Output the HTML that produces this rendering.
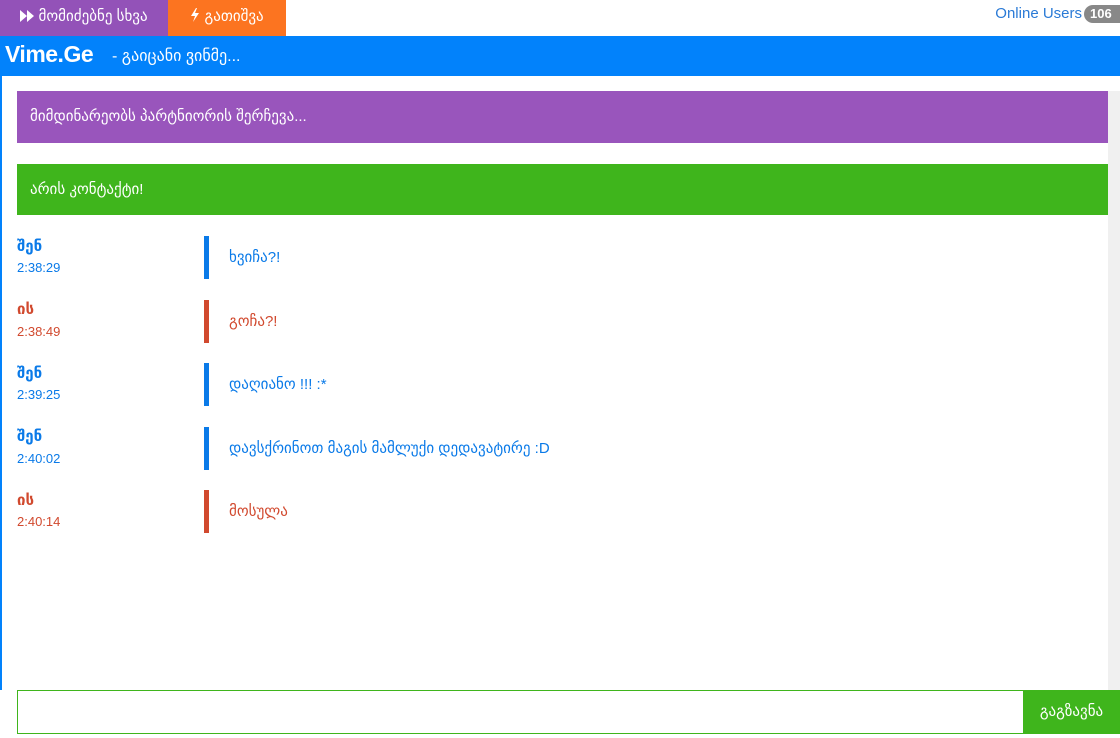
<!DOCTYPE html>
<html><head><meta charset="utf-8"><style>
*{margin:0;padding:0;box-sizing:border-box}
body{width:1120px;height:738px;overflow:hidden;background:#fff;font-family:"Liberation Sans","DejaVu Sans",sans-serif;position:relative}
.a{position:absolute}
.btn{top:0;height:36px;color:#fff;font-size:15px;line-height:34px;text-align:center}
.name{font-weight:bold;font-size:15px}
.time{font-size:13px}
.bar{width:5px;height:43px}
.msg{font-size:15px}
.b{color:#0a7ae8}.r{color:#d1492e}
</style></head><body>
<div class="a btn" style="left:0;width:168px;background:#9352b8"><svg width="14" height="12" viewBox="0 0 14 12" style="vertical-align:-1px"><path d="M0 0L7 6L0 12Z M7 0L14 6L7 12Z" fill="#fff"/></svg> მომიძებნე სხვა</div>
<div class="a btn" style="left:168px;width:118px;background:#fc7420"><svg width="10" height="14" viewBox="0 0 10 14" style="vertical-align:-1px"><path d="M6 0L1 8H5L3 14L9 5H5L7 0Z" fill="#fff"/></svg> გათიშვა</div>
<div class="a" style="right:38px;top:5px;font-size:15px;color:#2a7ad6">Online Users</div>
<div class="a" style="right:0;top:5px;width:36px;height:18px;background:#888;color:#fff;border-radius:9px 0 0 9px;font-size:13px;font-weight:bold;line-height:18px;padding-left:6px">106</div>
<div class="a" style="left:0;top:36px;width:1120px;height:40px;background:#0282fb"></div>
<div class="a" style="left:5px;top:41px;color:#fff;font-weight:bold;font-size:23px;letter-spacing:-0.5px">Vime.Ge</div>
<div class="a" style="left:112px;top:46px;color:#fff;font-size:16px">- გაიცანი ვინმე...</div>
<div class="a" style="left:0;top:76px;width:2px;height:614px;background:#0282fb"></div>
<div class="a" style="left:1108px;top:91px;width:12px;height:599px;background:#f0f0f0"></div>
<div class="a" style="left:17px;top:91px;width:1091px;height:52px;background:#9955bc;color:#fff;font-size:15px;line-height:52px;padding-left:13px">მიმდინარეობს პარტნიორის შერჩევა...</div>
<div class="a" style="left:17px;top:164px;width:1091px;height:51px;background:#3fb51c;color:#fff;font-size:15px;line-height:51px;padding-left:13px">არის კონტაქტი!</div>

<div class="a name b" style="left:17px;top:237px">შენ</div><div class="a time b" style="left:17px;top:260px">2:38:29</div>
<div class="a bar" style="left:204px;top:236px;background:#0a7ae8"></div><div class="a msg b" style="left:229px;top:248px">ხვიჩა?!</div>

<div class="a name r" style="left:17px;top:300px">ის</div><div class="a time r" style="left:17px;top:324px">2:38:49</div>
<div class="a bar" style="left:204px;top:300px;background:#d1492e"></div><div class="a msg r" style="left:229px;top:312px">გოჩა?!</div>

<div class="a name b" style="left:17px;top:364px">შენ</div><div class="a time b" style="left:17px;top:387px">2:39:25</div>
<div class="a bar" style="left:204px;top:363px;background:#0a7ae8"></div><div class="a msg b" style="left:229px;top:375px">დაღიანო !!! :*</div>

<div class="a name b" style="left:17px;top:427px">შენ</div><div class="a time b" style="left:17px;top:451px">2:40:02</div>
<div class="a bar" style="left:204px;top:427px;background:#0a7ae8"></div><div class="a msg b" style="left:229px;top:439px">დავსქრინოთ მაგის მამლუქი დედავატირე :D</div>

<div class="a name r" style="left:17px;top:491px">ის</div><div class="a time r" style="left:17px;top:514px">2:40:14</div>
<div class="a bar" style="left:204px;top:490px;background:#d1492e"></div><div class="a msg r" style="left:229px;top:502px">მოსულა</div>

<div class="a" style="left:17px;top:690px;width:1007px;height:44px;border:1px solid #3fb51c"></div>
<div class="a" style="left:1023px;top:690px;width:97px;height:44px;background:#3fb51c;color:#fff;font-size:15px;line-height:44px;text-align:center">გაგზავნა</div>
</body></html>
